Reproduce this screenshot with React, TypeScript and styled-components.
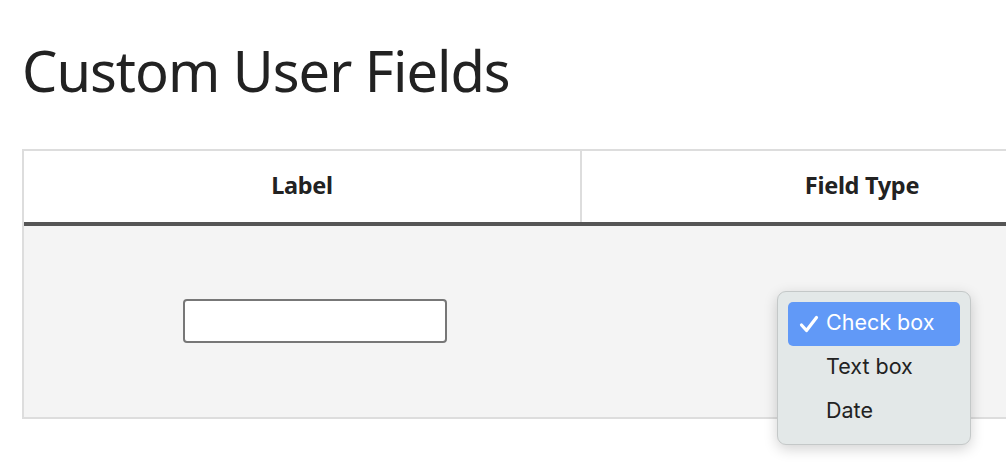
import React from 'react';
import styled, { createGlobalStyle } from 'styled-components';

const GlobalStyle = createGlobalStyle`
  html, body {
    margin: 0;
    padding: 0;
    background: #ffffff;
    overflow: hidden;
  }
  body {
    font-family: "Noto Sans", "Open Sans", sans-serif;
    color: #222222;
  }
`;

const FIELD_TYPES = ['Check box', 'Text box', 'Date'];

const Page = styled.div`
  width: 1006px;
  height: 468px;
  padding: 0 0 0 22px;
  box-sizing: border-box;
  overflow: hidden;
`;

const Title = styled.h1`
  margin: 0;
  padding-top: 30px;
  height: 149px;
  box-sizing: border-box;
  font-size: 56px;
  font-weight: 400;
  line-height: 80px;
  letter-spacing: -1px;
  color: #222222;
`;

const Table = styled.div`
  width: 1122px;
  border: 2px solid #dddddd;
  box-sizing: border-box;
`;

const HeadRow = styled.div`
  display: grid;
  grid-template-columns: 556px 1fr;
  height: 71px;
  border-bottom: 4px solid #555555;
`;

const HeadCell = styled.div<{ $divider?: boolean }>`
  display: flex;
  align-items: center;
  justify-content: center;
  padding-bottom: 3px;
  font-size: 23.5px;
  font-weight: 700;
  letter-spacing: -0.3px;
  color: #222222;
  border-left: ${({ $divider }) => ($divider ? '2px solid #dddddd' : 'none')};
`;

const BodyRow = styled.div`
  display: grid;
  grid-template-columns: 556px 1fr;
  height: 191px;
  background: #f4f4f4;
`;

const BodyCell = styled.div`
  position: relative;
  display: flex;
  align-items: center;
  justify-content: center;
`;

const TextInput = styled.input`
  width: 264px;
  height: 44px;
  margin-left: 26px;
  margin-bottom: 1px;
  box-sizing: border-box;
  border: 2px solid #777777;
  border-radius: 4px;
  background: #ffffff;
  outline: none;
`;

const Popup = styled.div`
  position: absolute;
  left: 197px;
  top: 65px;
  width: 194px;
  padding: 10px;
  box-sizing: border-box;
  background: #e3e8e8;
  border: 1px solid #c4c8c8;
  border-radius: 9px;
  box-shadow: 0 4px 14px rgba(0, 0, 0, 0.18);
  font-family: "Inter", "Liberation Sans", sans-serif;
`;

const Option = styled.div<{ $selected?: boolean }>`
  display: flex;
  align-items: center;
  height: 44px;
  padding-left: 38px;
  padding-bottom: 4px;
  box-sizing: border-box;
  position: relative;
  border-radius: 5px;
  font-size: 21.5px;
  color: ${({ $selected }) => ($selected ? '#ffffff' : '#222222')};
  background: ${({ $selected }) => ($selected ? '#6199f7' : 'transparent')};
`;

const Check = styled.svg`
  position: absolute;
  left: 11px;
  top: 13px;
`;

export default function App() {
  return (
    <>
      <GlobalStyle />
      <Page>
        <Title>Custom User Fields</Title>
        <Table>
          <HeadRow>
            <HeadCell>Label</HeadCell>
            <HeadCell $divider>Field Type</HeadCell>
          </HeadRow>
          <BodyRow>
            <BodyCell>
              <TextInput type="text" />
            </BodyCell>
            <BodyCell>
              <Popup>
                {FIELD_TYPES.map((type, i) => (
                  <Option key={type} $selected={i === 0}>
                    {i === 0 && (
                      <Check width="20" height="18" viewBox="0 0 20 18">
                        <path
                          d="M2.5 10 L7.5 15.5 L17.5 2.5"
                          fill="none"
                          stroke="#ffffff"
                          strokeWidth="3.2"
                          strokeLinecap="round"
                          strokeLinejoin="round"
                        />
                      </Check>
                    )}
                    {type}
                  </Option>
                ))}
              </Popup>
            </BodyCell>
          </BodyRow>
        </Table>
      </Page>
    </>
  );
}
